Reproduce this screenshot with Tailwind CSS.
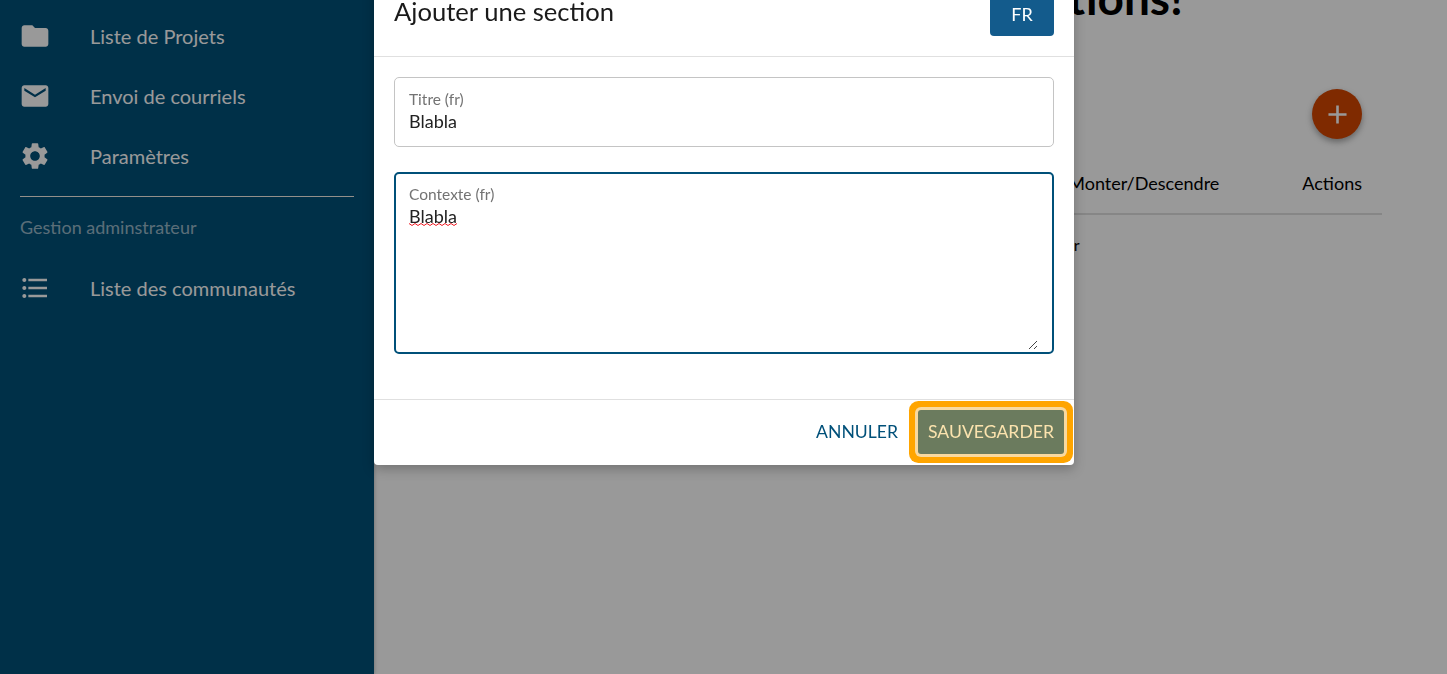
<!DOCTYPE html>
<html lang="fr">
<head>
    <meta charset="UTF-8">
    <meta name="viewport" content="width=device-width, initial-scale=1.0">
    <script src="https://cdn.jsdelivr.net/npm/@tailwindcss/browser@4"></script>
    <title>Ajouter une section</title>
</head>

<body class="h-[674px] overflow-hidden bg-white font-['Lato',sans-serif]">
    <div class="flex h-[674px] overflow-hidden">
        <!-- Menu de gauche -->
        <aside class="w-[374px] shrink-0 bg-[#005079] pt-[6px] text-white shadow-[0_0_4px_rgba(0,0,0,0.3)] z-10">
            <a class="flex h-[60px] items-center pl-[19px] text-[20px]">
                <span class="w-[71px]">
                    <svg viewBox="0 0 24 24" class="w-8 h-8 fill-white"><path d="M10 4H4c-1.1 0-1.99.9-1.99 2L2 18c0 1.1.9 2 2 2h16c1.1 0 2-.9 2-2V8c0-1.1-.9-2-2-2h-8l-2-2z"/></svg>
                </span>
                Liste de Projets
            </a>
            <a class="flex h-[60px] items-center pl-[19px] text-[20px]">
                <span class="w-[71px]">
                    <svg viewBox="0 0 24 24" class="w-8 h-8 fill-white"><path d="M20 4H4c-1.1 0-1.99.9-1.99 2L2 18c0 1.1.9 2 2 2h16c1.1 0 2-.9 2-2V6c0-1.1-.9-2-2-2zm0 4l-8 5-8-5V6l8 5 8-5v2z"/></svg>
                </span>
                Envoi de courriels
            </a>
            <a class="flex h-[60px] items-center pl-[19px] text-[20px]">
                <span class="w-[71px]">
                    <svg viewBox="0 0 24 24" class="w-8 h-8 fill-white"><path d="M19.14 12.94c.04-.3.06-.61.06-.94 0-.32-.02-.64-.07-.94l2.03-1.58c.18-.14.23-.41.12-.61l-1.92-3.32c-.12-.22-.37-.29-.59-.22l-2.39.96c-.5-.38-1.03-.7-1.62-.94l-.36-2.54c-.04-.24-.24-.41-.48-.41h-3.84c-.24 0-.43.17-.47.41l-.36 2.54c-.59.24-1.13.57-1.62.94l-2.39-.96c-.22-.08-.47 0-.59.22L2.74 8.87c-.12.21-.08.47.12.61l2.03 1.58c-.05.3-.09.63-.09.94s.02.64.07.94l-2.03 1.58c-.18.14-.23.41-.12.61l1.92 3.32c.12.22.37.29.59.22l2.39-.96c.5.38 1.03.7 1.62.94l.36 2.54c.05.24.24.41.48.41h3.84c.24 0 .44-.17.47-.41l.36-2.54c.59-.24 1.13-.56 1.62-.94l2.39.96c.22.08.47 0 .59-.22l1.92-3.32c.12-.22.07-.47-.12-.61l-2.01-1.58zM12 15.6c-1.98 0-3.6-1.62-3.6-3.6s1.62-3.6 3.6-3.6 3.6 1.62 3.6 3.6-1.62 3.6-3.6 3.6z"/></svg>
                </span>
                Paramètres
            </a>
            <div class="mx-5 mt-[10px] border-t border-[#f5efe6]"></div>
            <p class="mx-5 mt-[19px] h-[42px] text-[18px] leading-[22px] text-white/60">Gestion adminstrateur</p>
            <a class="flex h-[60px] items-center pl-[19px] text-[20px]">
                <span class="w-[71px]">
                    <svg viewBox="0 0 24 24" class="w-8 h-8 fill-white"><path d="M4 10.5c-.83 0-1.5.67-1.5 1.5s.67 1.5 1.5 1.5 1.5-.67 1.5-1.5-.67-1.5-1.5-1.5zm0-6c-.83 0-1.5.67-1.5 1.5S3.17 7.5 4 7.5 5.500 6.830 5.500 6 4.830 4.500 4 4.500zm0 12c-.83 0-1.500.680-1.500 1.500s.680 1.500 1.500 1.500 1.500-.680 1.500-1.500-.670-1.500-1.500-1.500zM7 19h14v-2H7v2zm0-6h14v-2H7v2zm0-8v2h14V5H7z"/></svg>
                </span>
                Liste des communautés
            </a>
        </aside>

        <!-- Contenu derrière la fenêtre -->
        <main class="flex-1 pr-[65px] text-black">
            <h1 class="mt-[-28px] h-[117px] pr-[199px] text-right text-[46px] leading-[52px] font-bold">Questions!</h1>
            <div class="flex justify-end pr-[20px]">
                <button class="flex h-[50px] w-[50px] items-center justify-center rounded-full bg-[#d44600] shadow-[0_3px_6px_rgba(0,0,0,0.35)]">
                    <svg viewBox="0 0 24 24" class="w-[31px] h-[31px] fill-white"><path d="M19 13h-6v6h-2v-6H5v-2h6V5h2v6h6v2z"/></svg>
                </button>
            </div>
            <div class="mt-[31px] flex h-[45px] justify-end gap-[83px] border-b-2 border-[#e0e0e0] pr-[20px] text-[18px] leading-[26px]">
                <span>Monter/Descendre</span>
                <span>Actions</span>
            </div>
            <p class="mt-[20px] pl-[653px] text-[16px] leading-[20px]">Monter</p>
        </main>
    </div>

    <!-- Voile + fenêtre -->
    <div class="fixed inset-0 z-20 bg-black/40"></div>
    <div class="absolute left-[374px] top-[-24px] z-30 w-[700px] rounded-[4px] bg-white shadow-[0_4px_12px_rgba(0,0,0,0.25)]">
        <header class="flex h-[81px] items-end justify-between border-b border-[#e0e0e0] px-5 pb-5">
            <h2 class="mb-[10px] text-[25.6px] leading-[30px] text-[#1a1a1a]">Ajouter une section</h2>
            <button class="h-[56px] w-[64px] rounded-[4px] bg-[#135b8c] pt-[12px] text-[18px] leading-[24px] text-white">FR</button>
        </header>
        <div class="px-5 pt-5 pb-[45px]">
            <div class="h-[70px] rounded-[5px] border border-[#c4c4c4] px-[14px] pt-[12px]">
                <div class="text-[15.5px] leading-[18px] text-[#737373]">Titre (fr)</div>
                <div class="text-[18px] leading-[26px] text-[#222]">Blabla</div>
            </div>
            <div class="relative mt-[25px] h-[182px] rounded-[5px] border-2 border-[#005079] px-[13px] pt-[11px]">
                <div class="text-[15.5px] leading-[18px] text-[#737373]">Contexte (fr)</div>
                <div class="text-[18px] leading-[26px] text-[#222]">
                    <span class="relative inline-block">Blabla
                        <svg viewBox="0 0 48 3" class="absolute left-0 top-[20px] w-[48px] h-[3px] fill-none stroke-[#f01c24]"><path d="M0 .5 3 2.500 6 .5 9 2.500 12 .5 15 2.500 18 .5 21 2.500 24 .5 27 2.500 30 .5 33 2.500 36 .5 39 2.500 42 .5 45 2.500 48 .5"/></svg>
                    </span>
                </div>
                <svg viewBox="0 0 10 10" class="absolute right-[14px] bottom-[2px] w-[10px] h-[10px] stroke-[#444]"><path d="M1 9 9 1M6 9 9 6"/></svg>
            </div>
        </div>
        <footer class="flex h-[66px] items-start justify-end gap-[20px] border-t border-[#e0e0e0] pt-[10px] pr-[10px]">
            <button class="h-[44px] text-[17.6px] text-[#005079]">ANNULER</button>
            <button class="h-[44px] w-[146px] rounded-[3px] bg-[#6b7b5e] text-[17.6px] text-[#fbe3ae] shadow-[0_0_0_3px_#f8d9a0,0_0_0_9px_#ffa500]">SAUVEGARDER</button>
        </footer>
    </div>
</body>

</html>
